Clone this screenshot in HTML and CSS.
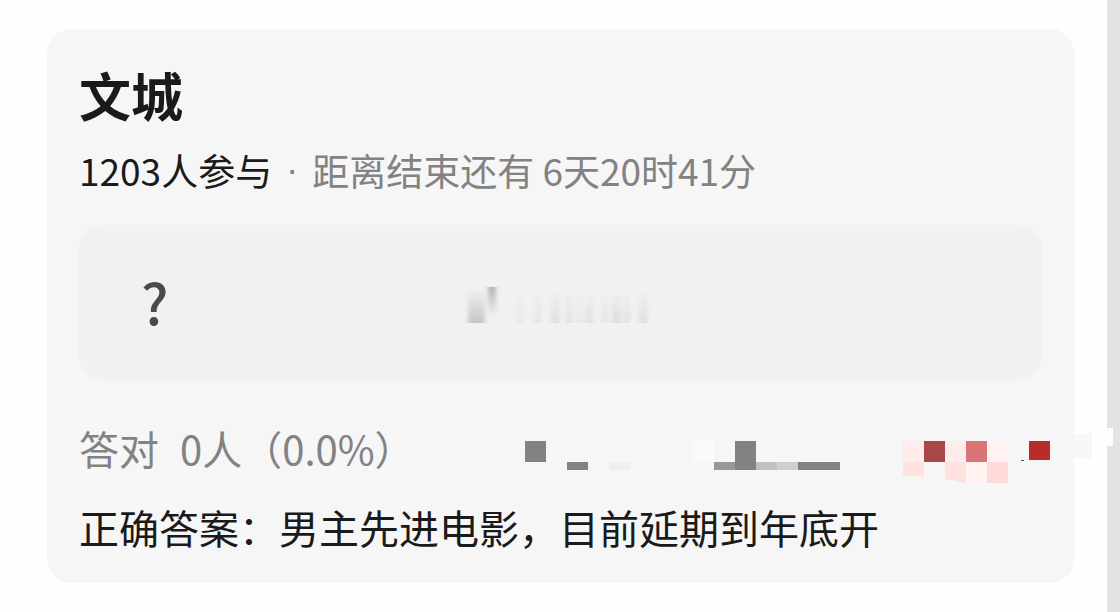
FILE: index.html
```html
<!DOCTYPE html>
<html lang="zh-CN">

<head>
    <meta charset="UTF-8" />
    <meta name="viewport" content="width=device-width, initial-scale=1.0" />
    <title>文城</title>
    <link rel="stylesheet" href="styles.css">
</head>

<body>
    <main class="page">
        <section class="card">
            <h1 class="title">文城</h1>
            <p class="info">
                <span>1203人参与</span>
                <span class="dot">·</span>
                <span class="time">距离结束还有 6天20时41分</span>
            </p>

            <div class="question">
                <span>?</span>
                <!-- 题目内容的遮挡 -->
                <svg class="smear" width="200" height="40" viewBox="0 0 200 40" aria-hidden="true">
                    <defs>
                        <linearGradient id="fade" x1="0" y1="0" x2="0" y2="1">
                            <stop offset="0" stop-color="#999" stop-opacity="0" />
                            <stop offset="1" stop-color="#999" stop-opacity="0.5" />
                        </linearGradient>
                        <linearGradient id="drop" x1="0" y1="0" x2="0" y2="1">
                            <stop offset="0" stop-color="#888" stop-opacity="0.6" />
                            <stop offset="1" stop-color="#888" stop-opacity="0" />
                        </linearGradient>
                        <filter id="soft" x="-50%" width="200%">
                            <feGaussianBlur stdDeviation="2 0" />
                        </filter>
                    </defs>
                    <g fill="url(#fade)" filter="url(#soft)">
                        <path d="M9 2h17v34H9z" />
                        <path d="M29 0h8v30h-8z" fill="url(#drop)" />
                        <path d="M58 2h6v34h-6z" opacity="0.2" />
                        <path d="M76 2h6v34h-6z" opacity="0.3" />
                        <path d="M92 2h9v34h-9z" opacity="0.4" />
                        <path d="M107 2h5v34h-5z" opacity="0.4" />
                        <path d="M112 2h16v34h-16z" opacity="0.15" />
                        <path d="M128 2h6v34h-6z" opacity="0.4" />
                        <path d="M143 2h6v34h-6z" opacity="0.3" />
                        <path d="M153 2h9v34h-9z" opacity="0.45" />
                        <path d="M165 2h6v34h-6z" opacity="0.4" />
                        <path d="M180 2h9v34h-9z" opacity="0.4" />
                    </g>
                </svg>
            </div>

            <div class="result">
                <span>答对</span>
                <span>0人（0.0%）</span>
                <!-- 马赛克 -->
                <svg class="mosaic" width="588" height="56" viewBox="0 0 588 56" aria-hidden="true" shape-rendering="crispEdges">
                    <path fill="#828282" d="M0 21h21v21H0zM42 42h21v8H42zM210 21h21v29h-21zM273 42h42v8h-42z" />
                    <path fill="#eee" d="M84 42h21v8H84z" />
                    <path fill="#fafafa" d="M168 21h21v21h-21z" />
                    <path fill="#979797" d="M189 42h21v8h-21z" />
                    <path fill="#c0c0c0" d="M231 42h21v8h-21z" />
                    <path fill="#cfcfcf" d="M252 42h21v8h-21z" />
                    <path fill="#ffecea" d="M378 21h21v21h-21zM420 21h21v21h-21z" />
                    <path fill="#a84747" d="M399 21h21v21h-21z" />
                    <path fill="#d97576" d="M441 21h21v21h-21z" />
                    <path fill="#fff2f1" d="M462 21h21v21h-21zM441 42h21v21h-21z" />
                    <path fill="#ffe2e0" d="M378 42h21v15l-21-2zM420 42h21v21l-21-4z" />
                    <path fill="#fddad9" d="M462 42h21v21h-21z" />
                    <path fill="#b72d2b" d="M504 21h21v19h-21z" />
                    <path fill="#8f3333" d="M496 40h3v1h-3z" />
                    <path fill="#fefefe" d="M549 9h33v20h-33z" />
                    <path fill="#f7f7f7" d="M549 15l18-3v26h-18z" />
                    <path fill="#fefefe" d="M582 8h6v18h-6z" />
                </svg>
            </div>
            <p class="answer">正确答案：男主先进电影，目前延期到年底开</p>
        </section>
    </main>
</body>

</html>
```

FILE: styles.css
```css
* {
    margin: 0;
    padding: 0;
    box-sizing: border-box;
}

body {
    font-family: "Noto Sans CJK SC", sans-serif;
    color: #1a1a1a;
    background: #fefefe;
}

.page {
    min-height: 100vh;
    padding: 29px 33px 28px 47px;
    border-right: 13px solid #e3e3e3;
}

.card {
    padding: 30px 32px 28px;
    border-radius: 24px;
    background: #f6f6f6;
}

.title {
    font-size: 52px;
    line-height: 72px;
    font-weight: bold;
}

.info {
    display: flex;
    margin-top: 15px;
    font-size: 37px;
    line-height: 48px;
    white-space: nowrap;
}

.dot {
    width: 40px;
    text-align: center;
    font-family: "Liberation Sans", sans-serif;
    color: #828282;
}

.time {
    color: #828282;
}

.question {
    display: flex;
    align-items: center;
    height: 155px;
    margin-top: 31px;
    padding-left: 62px;
    border-radius: 24px;
    background: #f1f1f1;
    color: #4a4a4a;
    font-size: 56px;
    font-weight: 500;
    line-height: 72px;
}

.question span {
    padding-bottom: 4px;
}

.smear {
    margin: 8px 0 0 290px;
}

.result {
    position: relative;
    display: flex;
    gap: 21px;
    margin-top: 40px;
    font-size: 40px;
    line-height: 56px;
    color: #828282;
    white-space: nowrap;
}

/* 马赛克盖在卡片右边缘上 */
.mosaic {
    position: absolute;
    top: 0;
    right: -71px;
    overflow: visible;
}

.answer {
    margin-top: 23px;
    font-size: 40px;
    line-height: 56px;
}
```
